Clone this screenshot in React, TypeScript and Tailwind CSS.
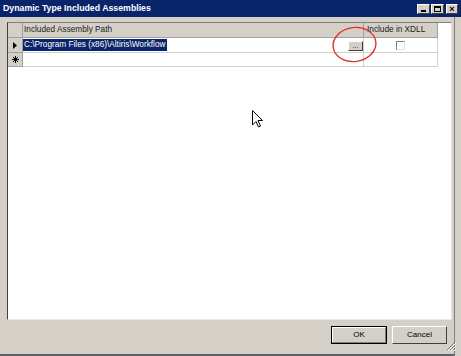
import React from "react";

const font = { fontFamily: '"Liberation Sans", Arial, sans-serif' };

function Btn3D({ className = "", children }: { className?: string; children?: React.ReactNode }) {
  return (
    <div
      className={`bg-[#d4d0c8] border border-t-white border-l-white border-r-[#404040] border-b-[#404040] ${className}`}
    >
      {children}
    </div>
  );
}

export default function App() {
  return (
    <div className="w-[461px] h-[356px] bg-[#d4d0c8] relative overflow-hidden flex flex-col" style={font}>
      {/* title bar */}
      <div className="h-[17px] bg-[#0a246a] flex items-center justify-between pl-[3px] pr-[3px] shrink-0">
        <span className="text-white font-bold text-[8.75px] leading-none tracking-[0px]">
          Dynamic Type Included Assemblies
        </span>
        <div className="flex items-center gap-[1px] pt-[1px]">
          <Btn3D className="w-[13px] h-[10px] flex items-end justify-center pb-[1px]">
            <div className="w-[5px] h-[2px] bg-black" />
          </Btn3D>
          <Btn3D className="w-[13px] h-[10px] flex items-center justify-center mr-[1px]">
            <div className="w-[7px] h-[6px] border border-black border-t-2" />
          </Btn3D>
          <Btn3D className="w-[12px] h-[10px] flex items-center justify-center">
            <span className="text-[9px] leading-none font-bold text-black">×</span>
          </Btn3D>
        </div>
      </div>

      {/* body */}
      <div className="flex-1 flex flex-col w-[455px] border-r border-r-[#808080] border-b-[2px] border-b-[#606060]">
        <div className="pl-[7px] pt-[5px] pr-[2px] flex-1 flex flex-col">
          {/* grid */}
          <div className="h-[298px] bg-white border border-t-[#808080] border-l-[#404040] border-r-[#e8e8e8] border-b-[#e8e8e8] flex flex-col">
            {/* header */}
            <div className="flex h-[15px] text-[8.25px] text-[#202020]">
              <div className="w-[15px] bg-[#d4d0c8] border-r border-b border-[#a0a0a0]" />
              <div className="w-[341px] bg-[#d4d0c8] border-r border-b border-[#a0a0a0] pl-[1px] flex items-center">
                Included Assembly Path
              </div>
              <div className="w-[74px] bg-[#d4d0c8] border-r border-b border-[#a0a0a0] pl-[3px] flex items-center">
                Include in XDLL
              </div>
            </div>
            {/* row 1 */}
            <div className="flex h-[15px] text-[8.25px]">
              <div className="w-[15px] bg-[#d4d0c8] border-r border-b border-[#a0a0a0] flex items-center justify-center">
                <svg width="5" height="7" viewBox="0 0 5 7">
                  <path d="M0 0 L4 3.5 L0 7 Z" fill="#000" />
                </svg>
              </div>
              <div className="w-[341px] border-r border-b border-[#d0d0d0] flex items-center justify-between pr-[0px]">
                <span className="bg-[#0a246a] text-white h-[12px] flex items-center pl-[1px] pr-[1px]">
                  C:\Program Files (x86)\Altiris\Workflow
                </span>
                <Btn3D className="w-[15px] h-[10px] flex items-center justify-center text-[7px] leading-none text-black mt-[2px]">
                  <span className="-mt-[2px]">...</span>
                </Btn3D>
              </div>
              <div className="w-[74px] border-r border-b border-[#d0d0d0] flex items-center justify-center">
                <div className="w-[9px] h-[9px] border border-t-[#808080] border-l-[#808080] border-r-[#e0e0e0] border-b-[#e0e0e0] bg-white" />
              </div>
            </div>
            {/* row 2 */}
            <div className="flex h-[14px] text-[8px]">
              <div className="w-[15px] bg-[#d4d0c8] border-r border-b border-[#a0a0a0] flex items-center justify-center">
                <svg width="7" height="7" viewBox="0 0 7 7">
                  <path d="M3.5 0 L3.5 7 M0 3.5 L7 3.5 M1 1 L6 6 M6 1 L1 6" stroke="#000" strokeWidth="1" />
                </svg>
              </div>
              <div className="w-[341px] border-r border-b border-[#d0d0d0]" />
              <div className="w-[74px] border-r border-b border-[#d0d0d0]" />
            </div>
          </div>

          {/* buttons */}
          <div className="flex justify-end gap-[5px] pt-[6px] pr-[5px]">
            <div className="w-[56px] h-[18px] border border-black flex">
              <div className="flex-1 border border-t-white border-l-white border-r-[#808080] border-b-[#808080] flex items-center justify-center text-[8px] text-black">
                OK
              </div>
            </div>
            <Btn3D className="w-[55px] h-[18px] flex items-center justify-center text-[8px] text-black">
              Cancel
            </Btn3D>
          </div>
        </div>
      </div>

      {/* size grip */}
      <svg className="absolute left-[446px] top-[341px]" width="10" height="10" viewBox="0 0 10 10">
        <path d="M9 1 L1 9 M9 4 L4 9 M9 7 L7 9" stroke="#808080" strokeWidth="1" />
        <path d="M10 2 L2 10 M10 5 L5 10 M10 8 L8 10" stroke="#ffffff" strokeWidth="1" />
      </svg>

      {/* red ellipse annotation */}
      <svg className="absolute left-[330px] top-[24px]" width="50" height="42" viewBox="0 0 50 42">
        <ellipse cx="24.5" cy="20.5" rx="21.5" ry="17" fill="none" stroke="#e03030" strokeWidth="1.4" transform="rotate(-8 24.5 20.5)" />
      </svg>

      {/* mouse cursor */}
      <svg className="absolute left-[252px] top-[110px]" width="12" height="19" viewBox="0 0 12 19">
        <path d="M0.5 0.5 L0.5 15 L4 11.5 L6.5 17 L8.5 16 L6 10.5 L10.5 10.5 Z" fill="#fff" stroke="#000" strokeWidth="1" strokeLinejoin="miter" />
      </svg>
    </div>
  );
}
